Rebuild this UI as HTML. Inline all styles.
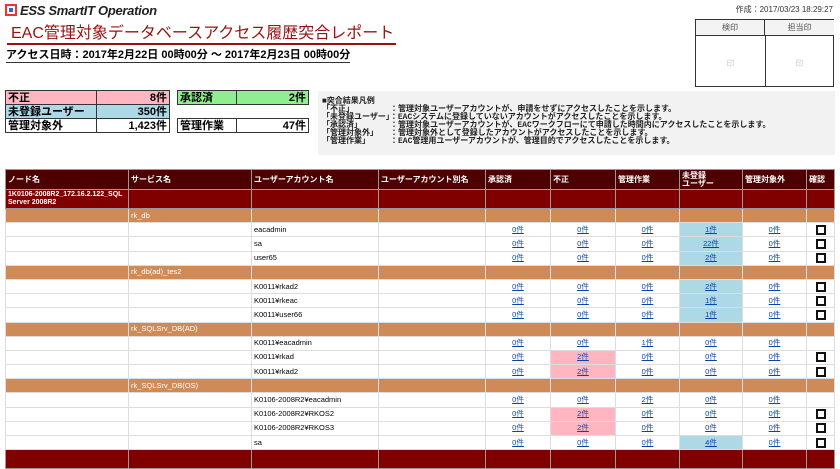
<!DOCTYPE html>
<html><head><meta charset="utf-8"><style>
*{margin:0;padding:0;box-sizing:border-box}
body{width:840px;height:451px;overflow:hidden;background:#fff;font-family:"Liberation Sans","Noto Sans CJK JP",sans-serif;position:relative;color:#000}
.abs{position:absolute}
.logo{left:5px;top:3px;font-size:13px;font-weight:bold;font-style:italic;color:#222;letter-spacing:-0.3px}
.logo i{display:inline-block;width:12px;height:12px;border:2px solid #e33;background:#36c;vertical-align:-1px;margin-right:3px;box-shadow:inset 0 0 0 2px #fff}
.title{left:7px;top:25px;font-size:16px;color:#9b1010;border-bottom:2px solid #9b1010;line-height:18px;padding:0 2px 0 4px}
.sub{left:6px;top:48px;font-size:11px;font-weight:bold;line-height:14px;border-bottom:1px solid #333}
.date{right:7px;top:4px;font-size:8px;color:#333}
.stamp{left:695px;top:19px;width:139px;height:68px;border:1px solid #333}
.stamp div{position:absolute;font-size:8px;color:#555;text-align:center}
table.s{position:absolute;border-collapse:collapse;font-size:11px;font-weight:bold}
table.s td{border:1px solid #333;height:14px;padding:0 2px;line-height:12px}
.leg{left:318px;top:91px;width:517px;height:64px;background:#f2f2f2;font-size:8px;line-height:8px;padding:7px 0 0 4px;white-space:pre;font-family:"Liberation Mono","Noto Sans CJK JP",monospace;font-weight:bold;color:#222}
.g{position:absolute;left:5px;top:169px;border-collapse:collapse;table-layout:fixed;width:829px}
.g td{border:1px solid #ddd;font-size:7.5px;height:14.2px;padding:0 2px;white-space:nowrap;overflow:hidden;line-height:10px}
.g tr.h td{background:#4d0000;color:#fff;font-weight:bold;height:20px;border-color:#999;font-size:8px;line-height:8px}
.g tr.n td{background:#800000;color:#fff;font-weight:bold;height:19px;border-color:#999;line-height:8px;font-size:7px}
.g tr.o td{background:#cf8b57;color:#fff;border-color:#ddd}
.g td.c{text-align:center;color:#0645ad;text-decoration:underline}
.g td.p{background:#ffb6c1}
.g td.b{background:#add8e6}
.cb{display:block;width:10px;height:10px;border:2px solid #111;margin:0 auto}
</style></head><body>
<div class="abs logo"><i></i>ESS SmartIT Operation</div>
<div class="abs title">EAC管理対象データベースアクセス履歴突合レポート</div>
<div class="abs sub">アクセス日時：2017年2月22日 00時00分 ～ 2017年2月23日 00時00分</div>
<div class="abs date">作成：2017/03/23 18:29:27</div>
<div class="abs stamp">
<div style="left:0;top:0;width:69px;height:16px;border-right:1px solid #333;border-bottom:1px solid #333;background:#f3f3f3;line-height:15px">検印</div>
<div style="left:69px;top:0;width:69px;height:16px;border-bottom:1px solid #333;background:#f3f3f3;line-height:15px">担当印</div>
<div style="left:69px;top:16px;width:0;height:51px;border-left:1px solid #333"></div>
<div style="left:0;top:38px;width:69px;color:#ccc">印</div>
<div style="left:69px;top:38px;width:69px;color:#ccc">印</div>
</div>
<table class="s" style="left:5px;top:90px;width:165px">
<tr><td style="background:#ffb6c1;width:91px">不正</td><td style="background:#ffb6c1;text-align:right">8件</td></tr>
<tr><td style="background:#add8e6">未登録ユーザー</td><td style="background:#add8e6;text-align:right">350件</td></tr>
<tr><td>管理対象外</td><td style="text-align:right">1,423件</td></tr>
</table>
<table class="s" style="left:177px;top:90px;width:132px">
<tr><td style="background:#90ee90;width:59px">承認済</td><td style="background:#90ee90;text-align:right">2件</td></tr>
</table>
<table class="s" style="left:177px;top:118px;width:132px">
<tr><td style="width:59px">管理作業</td><td style="text-align:right">47件</td></tr>
</table>
<div class="abs leg">■突合結果凡例
「不正」　　　　　：管理対象ユーザーアカウントが、申請をせずにアクセスしたことを示します。
「未登録ユーザー」：EACシステムに登録していないアカウントがアクセスしたことを示します。
「承認済」　　　　：管理対象ユーザーアカウントが、EACワークフローにて申請した時間内にアクセスしたことを示します。
「管理対象外」　　：管理対象外として登録したアカウントがアクセスしたことを示します。
「管理作業」　　　：EAC管理用ユーザーアカウントが、管理目的でアクセスしたことを示します。</div>
<table class="g">
<colgroup><col style="width:123px"><col style="width:123px"><col style="width:127px"><col style="width:107px"><col style="width:65px"><col style="width:65px"><col style="width:64px"><col style="width:63px"><col style="width:64px"><col style="width:28px"></colgroup>
<tr class="h"><td>ノード名</td><td>サービス名</td><td>ユーザーアカウント名</td><td>ユーザーアカウント別名</td><td>承認済</td><td>不正</td><td>管理作業</td><td>未登録<br>ユーザー</td><td>管理対象外</td><td>確認</td></tr>
<tr class="n"><td>1K0106-2008R2_172.16.2.122_SQL<br>Server 2008R2</td><td></td><td></td><td></td><td></td><td></td><td></td><td></td><td></td><td></td></tr>
<tr class="o"><td></td><td>rk_db</td><td></td><td></td><td></td><td></td><td></td><td></td><td></td><td></td></tr>
<tr><td></td><td></td><td>eacadmin</td><td></td><td class="c">0件</td><td class="c">0件</td><td class="c">0件</td><td class="c b">1件</td><td class="c">0件</td><td><span class="cb"></span></td></tr>
<tr><td></td><td></td><td>sa</td><td></td><td class="c">0件</td><td class="c">0件</td><td class="c">0件</td><td class="c b">22件</td><td class="c">0件</td><td><span class="cb"></span></td></tr>
<tr><td></td><td></td><td>user65</td><td></td><td class="c">0件</td><td class="c">0件</td><td class="c">0件</td><td class="c b">2件</td><td class="c">0件</td><td><span class="cb"></span></td></tr>
<tr class="o"><td></td><td>rk_db(ad)_tes2</td><td></td><td></td><td></td><td></td><td></td><td></td><td></td><td></td></tr>
<tr><td></td><td></td><td>K0011¥rkad2</td><td></td><td class="c">0件</td><td class="c">0件</td><td class="c">0件</td><td class="c b">2件</td><td class="c">0件</td><td><span class="cb"></span></td></tr>
<tr><td></td><td></td><td>K0011¥rkeac</td><td></td><td class="c">0件</td><td class="c">0件</td><td class="c">0件</td><td class="c b">1件</td><td class="c">0件</td><td><span class="cb"></span></td></tr>
<tr><td></td><td></td><td>K0011¥user66</td><td></td><td class="c">0件</td><td class="c">0件</td><td class="c">0件</td><td class="c b">1件</td><td class="c">0件</td><td><span class="cb"></span></td></tr>
<tr class="o"><td></td><td>rk_SQLSrv_DB(AD)</td><td></td><td></td><td></td><td></td><td></td><td></td><td></td><td></td></tr>
<tr><td></td><td></td><td>K0011¥eacadmin</td><td></td><td class="c">0件</td><td class="c">0件</td><td class="c">1件</td><td class="c">0件</td><td class="c">0件</td><td></td></tr>
<tr><td></td><td></td><td>K0011¥rkad</td><td></td><td class="c">0件</td><td class="c p">2件</td><td class="c">0件</td><td class="c">0件</td><td class="c">0件</td><td><span class="cb"></span></td></tr>
<tr><td></td><td></td><td>K0011¥rkad2</td><td></td><td class="c">0件</td><td class="c p">2件</td><td class="c">0件</td><td class="c">0件</td><td class="c">0件</td><td><span class="cb"></span></td></tr>
<tr class="o"><td></td><td>rk_SQLSrv_DB(OS)</td><td></td><td></td><td></td><td></td><td></td><td></td><td></td><td></td></tr>
<tr><td></td><td></td><td>K0106-2008R2¥eacadmin</td><td></td><td class="c">0件</td><td class="c">0件</td><td class="c">2件</td><td class="c">0件</td><td class="c">0件</td><td></td></tr>
<tr><td></td><td></td><td>K0106-2008R2¥RKOS2</td><td></td><td class="c">0件</td><td class="c p">2件</td><td class="c">0件</td><td class="c">0件</td><td class="c">0件</td><td><span class="cb"></span></td></tr>
<tr><td></td><td></td><td>K0106-2008R2¥RKOS3</td><td></td><td class="c">0件</td><td class="c p">2件</td><td class="c">0件</td><td class="c">0件</td><td class="c">0件</td><td><span class="cb"></span></td></tr>
<tr><td></td><td></td><td>sa</td><td></td><td class="c">0件</td><td class="c">0件</td><td class="c">0件</td><td class="c b">4件</td><td class="c">0件</td><td><span class="cb"></span></td></tr>
<tr class="n"><td></td><td></td><td></td><td></td><td></td><td></td><td></td><td></td><td></td><td></td></tr>
</table>
</body></html>
